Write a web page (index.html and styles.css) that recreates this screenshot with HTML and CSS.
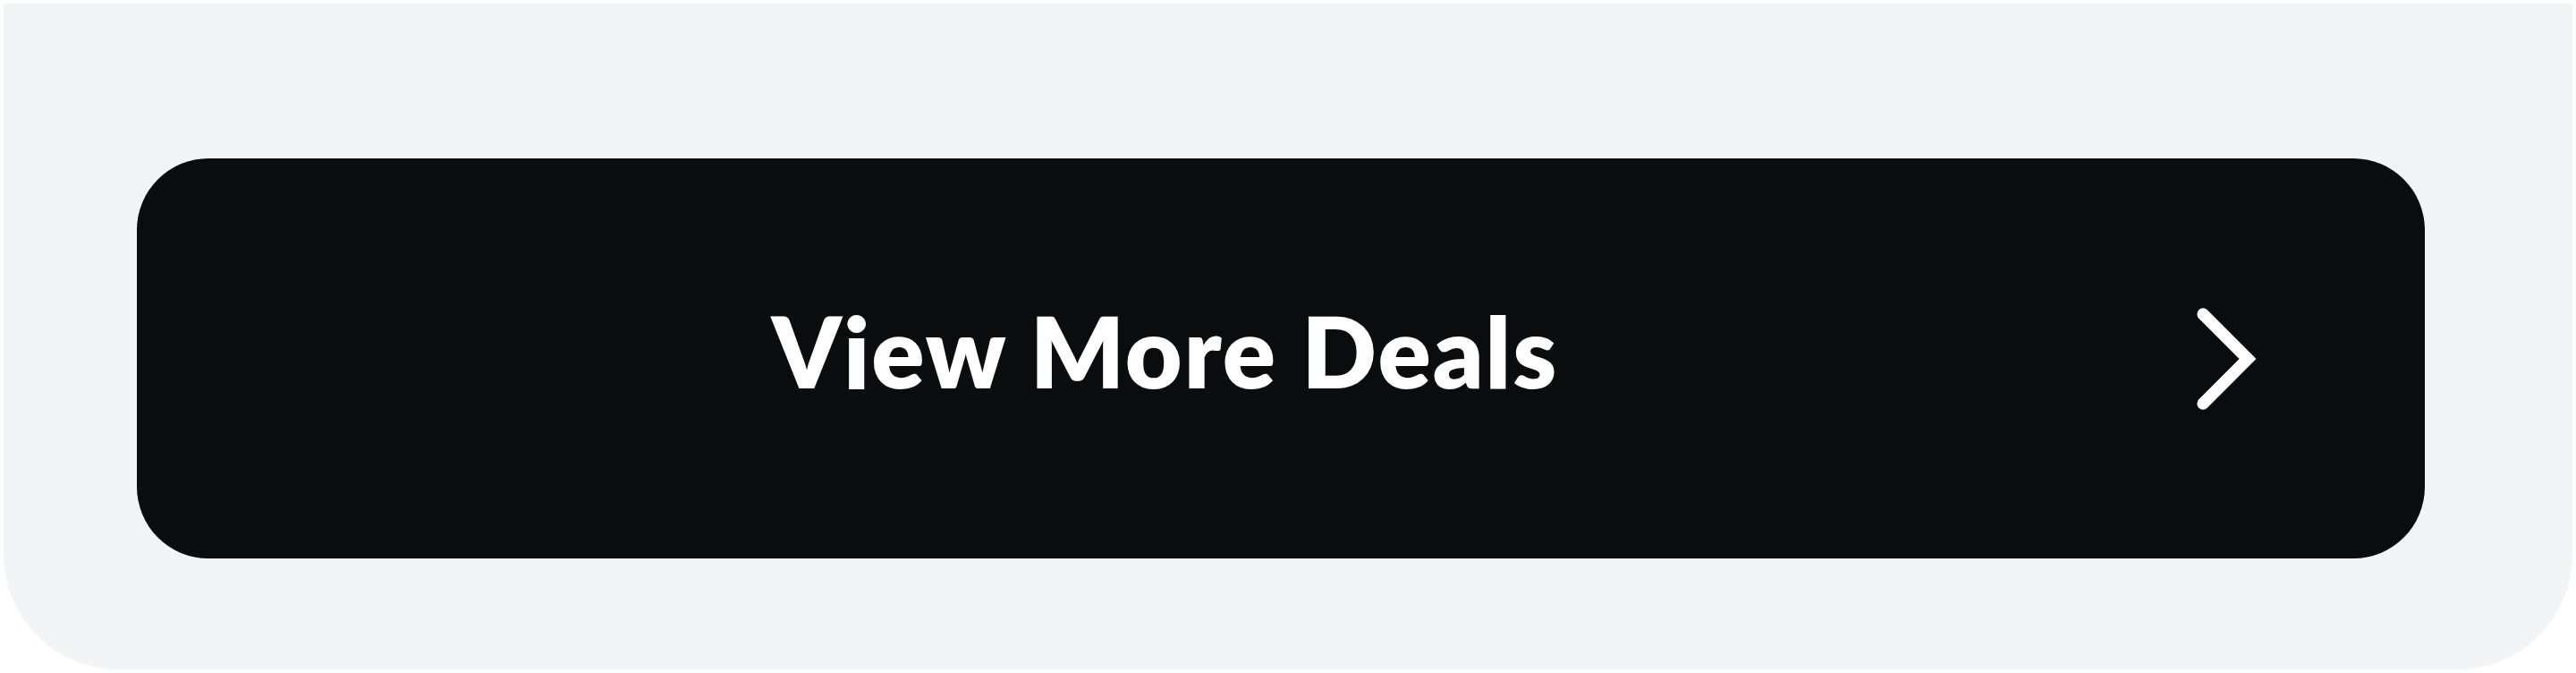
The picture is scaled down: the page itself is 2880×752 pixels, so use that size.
FILE: index.html
```html
<!DOCTYPE html>
<html lang="en">
<head>
  <meta charset="UTF-8" />
  <meta name="viewport" content="width=device-width, initial-scale=1.0"/>
  <title>Deals</title>
  <link rel="stylesheet" href="styles.css">
</head>
<body>

<!-- Карточка с кнопкой "ещё предложения" -->
<section class="deals-footer">
  <a href="#" class="more-btn">
    <span class="more-label">View More Deals</span>
    <svg class="more-icon" viewBox="0 0 24 24" fill="none" stroke="currentColor" stroke-width="1.6" stroke-linecap="round" stroke-linejoin="miter">
      <path d="M9 6l6 6-6 6"/>
    </svg>
  </a>
</section>

</body>
</html>
```

FILE: styles.css
```css
:root {
  --card-bg: #f3f4f6;
  --btn-bg: #0b0c0e;
  --text-light: #ffffff;
}

* {
  margin: 0;
  padding: 0;
  box-sizing: border-box;
}

body {
  margin: 4px;
  font-family: 'Lato', 'Inter', sans-serif;
  background-color: #ffffff;
}

/* Подложка карточки */
.deals-footer {
  background-color: var(--card-bg);
  border-radius: 0 0 128px 128px;
  padding: 173px 165px 124px 149px;
}

/* Кнопка */
.more-btn {
  display: flex;
  align-items: center;
  height: 447px;
  padding: 0 123px 0 64px;
  background-color: var(--btn-bg);
  border-radius: 80px;
  color: var(--text-light);
  text-decoration: none;
}

.more-label {
  flex: 1;
  text-align: center;
  font-size: 110px;
  font-weight: 800;
  letter-spacing: 2px;
  line-height: 1.2;
  margin-bottom: 20px;
}

.more-icon {
  width: 200px;
  height: 200px;
  flex: none;
}
```
